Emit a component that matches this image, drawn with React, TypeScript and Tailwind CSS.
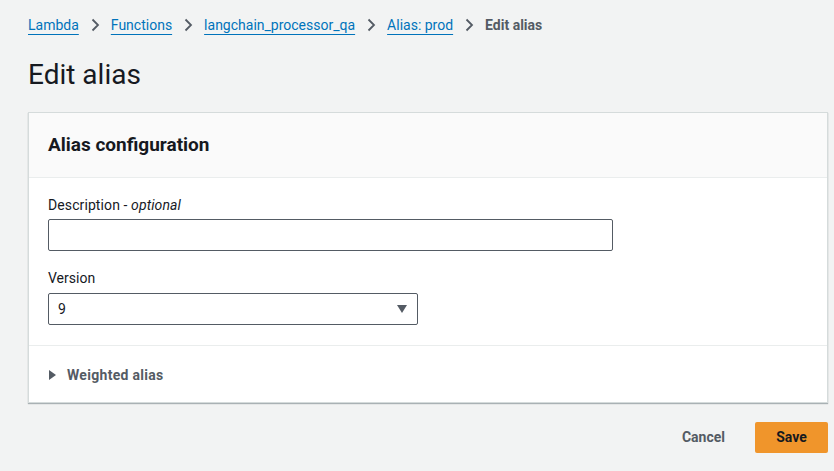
import React from "react";

const Chevron = () => (
  <svg width="10" height="14" viewBox="0 0 10 14" className="mx-[11px]" fill="none">
    <path d="M2.5 1.5 L8 7 L2.5 12.5" stroke="#545b64" strokeWidth="1.8" />
  </svg>
);

export default function App() {
  const crumbs = ["Lambda", "Functions", "langchain_processor_qa", "Alias: prod"];
  return (
    <div
      className="w-[834px] h-[471px] bg-[#f2f3f3] text-[#16191f] overflow-hidden"
      style={{ fontFamily: "Roboto, 'Liberation Sans', sans-serif" }}
    >
      <div className="pl-[28px] pt-[14px] flex items-center leading-[22px] text-[14px]">
        {crumbs.map((c) => (
          <React.Fragment key={c}>
            <span className="text-[#0073bb] underline underline-offset-[4px] decoration-[1px]">{c}</span>
            <Chevron />
          </React.Fragment>
        ))}
        <span className="font-bold text-[#545b64]">Edit alias</span>
      </div>
      <h1 className="pl-[28px] mt-[22px] text-[28px] leading-[34px] font-normal">Edit alias</h1>
      <div className="ml-[28px] mr-[6px] mt-[20px] bg-white border border-[#d5dbdb] shadow-[0_1px_1px_0_rgba(0,28,36,0.3)]">
        <div className="h-[65px] bg-[#fafafa] border-b border-[#eaeded] flex items-center pl-[19px]">
          <span className="text-[19px] font-bold">Alias configuration</span>
        </div>
        <div className="px-[19px] pt-[17px] pb-[20px]">
          <div className="text-[14px] leading-[20px] tracking-[0.1px]">
            Description - <i>optional</i>
          </div>
          <div className="mt-[4px] w-[565px] h-[32px] border border-[#545b64] rounded-[2px] bg-white" />
          <div className="mt-[17px] text-[14px] leading-[20px]">Version</div>
          <div className="mt-[5px] w-[370px] h-[32px] border border-[#545b64] rounded-[2px] bg-white flex items-center justify-between pl-[9px] pr-[10px] text-[14px]">
            <span>9</span>
            <svg width="10" height="8" viewBox="0 0 10 8">
              <path d="M0 0 H10 L5 8 Z" fill="#545b64" />
            </svg>
          </div>
        </div>
        <div className="border-t border-[#eaeded] h-[57px] flex items-center pl-[20px] pt-[2px]">
          <svg width="7" height="10" viewBox="0 0 7 10" className="mr-[11px]">
            <path d="M0 0 L7 5 L0 10 Z" fill="#545b64" />
          </svg>
          <span className="text-[14px] font-bold text-[#545b64] tracking-[0.3px]">Weighted alias</span>
        </div>
      </div>
      <div className="flex justify-end items-center mr-[6px] mt-[19px]">
        <span className="text-[14px] font-bold text-[#545b64] mr-[30px]">Cancel</span>
        <div className="w-[73px] h-[31px] bg-[#f0952b] rounded-[2px] flex items-center justify-center text-[14px] font-bold text-[#16191f]">
          Save
        </div>
      </div>
    </div>
  );
}
